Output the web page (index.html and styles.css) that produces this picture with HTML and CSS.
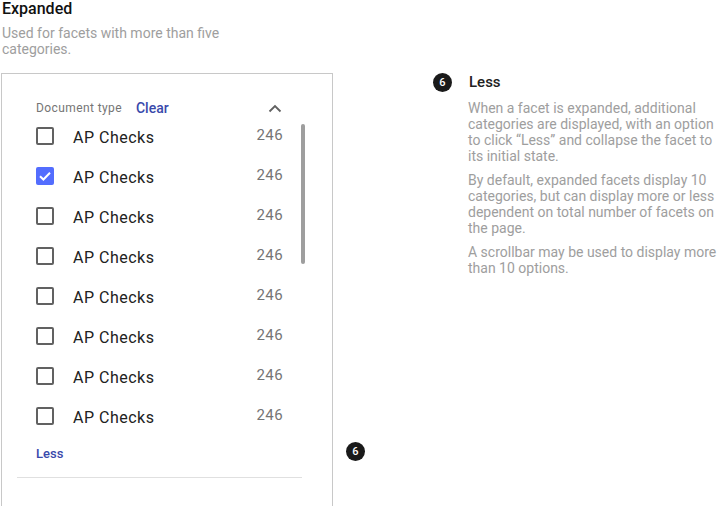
FILE: index.html
```html
<!DOCTYPE html>
<html>
<head>
<meta charset="utf-8">
<link rel="stylesheet" href="styles.css">
</head>
<body>
<div class="page">
  <div class="left">
    <h1 class="title">Expanded</h1>
    <p class="desc">Used for facets with more than five categories.</p>
    <div class="card-wrap">
      <div class="card">
        <div class="facet-head">
          <span class="facet-name">Document type</span>
          <a class="link clear">Clear</a>
          <svg class="chev" width="14" height="9" viewBox="0 0 14 9"><path d="M1.5 7.5 L7 2 L12.5 7.5" fill="none" stroke="#616161" stroke-width="1.8"/></svg>
        </div>
        <div class="scroll">
          <ul class="list">
            <li class="row"><span class="cb"></span><span class="label">AP Checks</span><span class="count">246</span></li>
            <li class="row"><span class="cb checked"><svg width="18" height="18" viewBox="0 0 18 18"><path d="M4 9.2 L7.4 12.5 L14 5.8" fill="none" stroke="#fff" stroke-width="2"/></svg></span><span class="label">AP Checks</span><span class="count">246</span></li>
            <li class="row"><span class="cb"></span><span class="label">AP Checks</span><span class="count">246</span></li>
            <li class="row"><span class="cb"></span><span class="label">AP Checks</span><span class="count">246</span></li>
            <li class="row"><span class="cb"></span><span class="label">AP Checks</span><span class="count">246</span></li>
            <li class="row"><span class="cb"></span><span class="label">AP Checks</span><span class="count">246</span></li>
            <li class="row"><span class="cb"></span><span class="label">AP Checks</span><span class="count">246</span></li>
            <li class="row"><span class="cb"></span><span class="label">AP Checks</span><span class="count">246</span></li>
          </ul>
          <div class="track"><div class="thumb"></div></div>
        </div>
        <a class="link less">Less</a>
        <div class="divider"></div>
      </div>
      <span class="badge badge-card">6</span>
    </div>
  </div>
  <div class="right">
    <div class="note-head">
      <span class="badge">6</span>
      <h2 class="note-title">Less</h2>
    </div>
    <div class="note-body">
      <p>When a facet is expanded, additional categories are displayed, with an option to click “Less” and collapse the facet to its initial state.</p>
      <p>By default, expanded facets display 10 categories, but can display more or less dependent on total number of facets on the page.</p>
      <p>A scrollbar may be used to display more than 10 options.</p>
    </div>
  </div>
</div>
</body>
</html>
```
FILE: styles.css
```css
* { box-sizing: border-box; }
html, body { margin: 0; padding: 0; background: #fff; }
body { font-family: Roboto, "Noto Sans", sans-serif; color: #212121; overflow: hidden; }
.page { display: flex; align-items: flex-start; }
.left { width: 333px; flex: none; padding-left: 1px; }
.title { margin: 0 0 0 1px; font-size: 16px; font-weight: 500; line-height: 17px; color: #111; }
.desc { margin: 8px 0 0 1px; width: 228px; font-size: 14px; line-height: 16px; color: #9e9e9e; }
.card-wrap { position: relative; margin-top: 16px; }
.card { width: 332px; border: 1px solid #c8c8c8; padding: 26px 30px 27px 34px; height: 434px; }
.facet-head { display: flex; align-items: center; height: 16px; width: 247px; }
.facet-name { font-size: 12px; letter-spacing: 0.4px; color: #757575; }
.link { color: #3949ab; font-weight: 500; cursor: pointer; }
.clear { font-size: 14px; margin-left: 14px; }
.chev { margin-left: auto; margin-right: 1px; margin-top: 1px; }
.scroll { display: flex; align-items: flex-start; }
.list { list-style: none; margin: 0; padding: 0; width: 247px; flex: none; }
.row { display: flex; align-items: center; height: 40px; }
.cb { width: 18px; height: 18px; border: 2px solid #616161; border-radius: 2px; flex: none; }
.cb.checked { border: none; background: #536dfe; }
.cb.checked svg { display: block; }
.label { margin-left: 19px; font-size: 16px; letter-spacing: 0.5px; color: #212121; margin-top: 2px; }
.count { margin-left: auto; font-size: 15px; letter-spacing: 0.4px; color: #757575; margin-top: -2px; }
.track { margin-left: 18px; width: 4px; padding-top: 8px; flex: none; }
.thumb { width: 4px; height: 140px; border-radius: 2px; background: #9e9e9e; }
.less { display: block; margin-top: 10px; font-size: 13px; line-height: 16px; }
.divider { height: 1px; background: #e0e0e0; margin: 15px 0 0 -19px; width: 285px; }
.badge { display: inline-flex; align-items: center; justify-content: center; width: 19px; height: 19px; border-radius: 50%; background: #1a1a1a; color: #fff; font-size: 11px; font-weight: 500; flex: none; }
.badge-card { position: absolute; left: 345px; top: 369px; }
.right { margin-left: 100px; margin-top: 73px; width: 284px; flex: none; }
.note-head { display: flex; align-items: center; }
.note-title { margin: 0 0 0 17px; font-size: 15px; font-weight: 500; line-height: 19px; color: #212121; }
.note-body { padding-left: 35px; margin-top: 8px; width: 286px; }
.note-body p { margin: 0 0 8px; font-size: 14px; line-height: 16px; color: #9e9e9e; }
```
